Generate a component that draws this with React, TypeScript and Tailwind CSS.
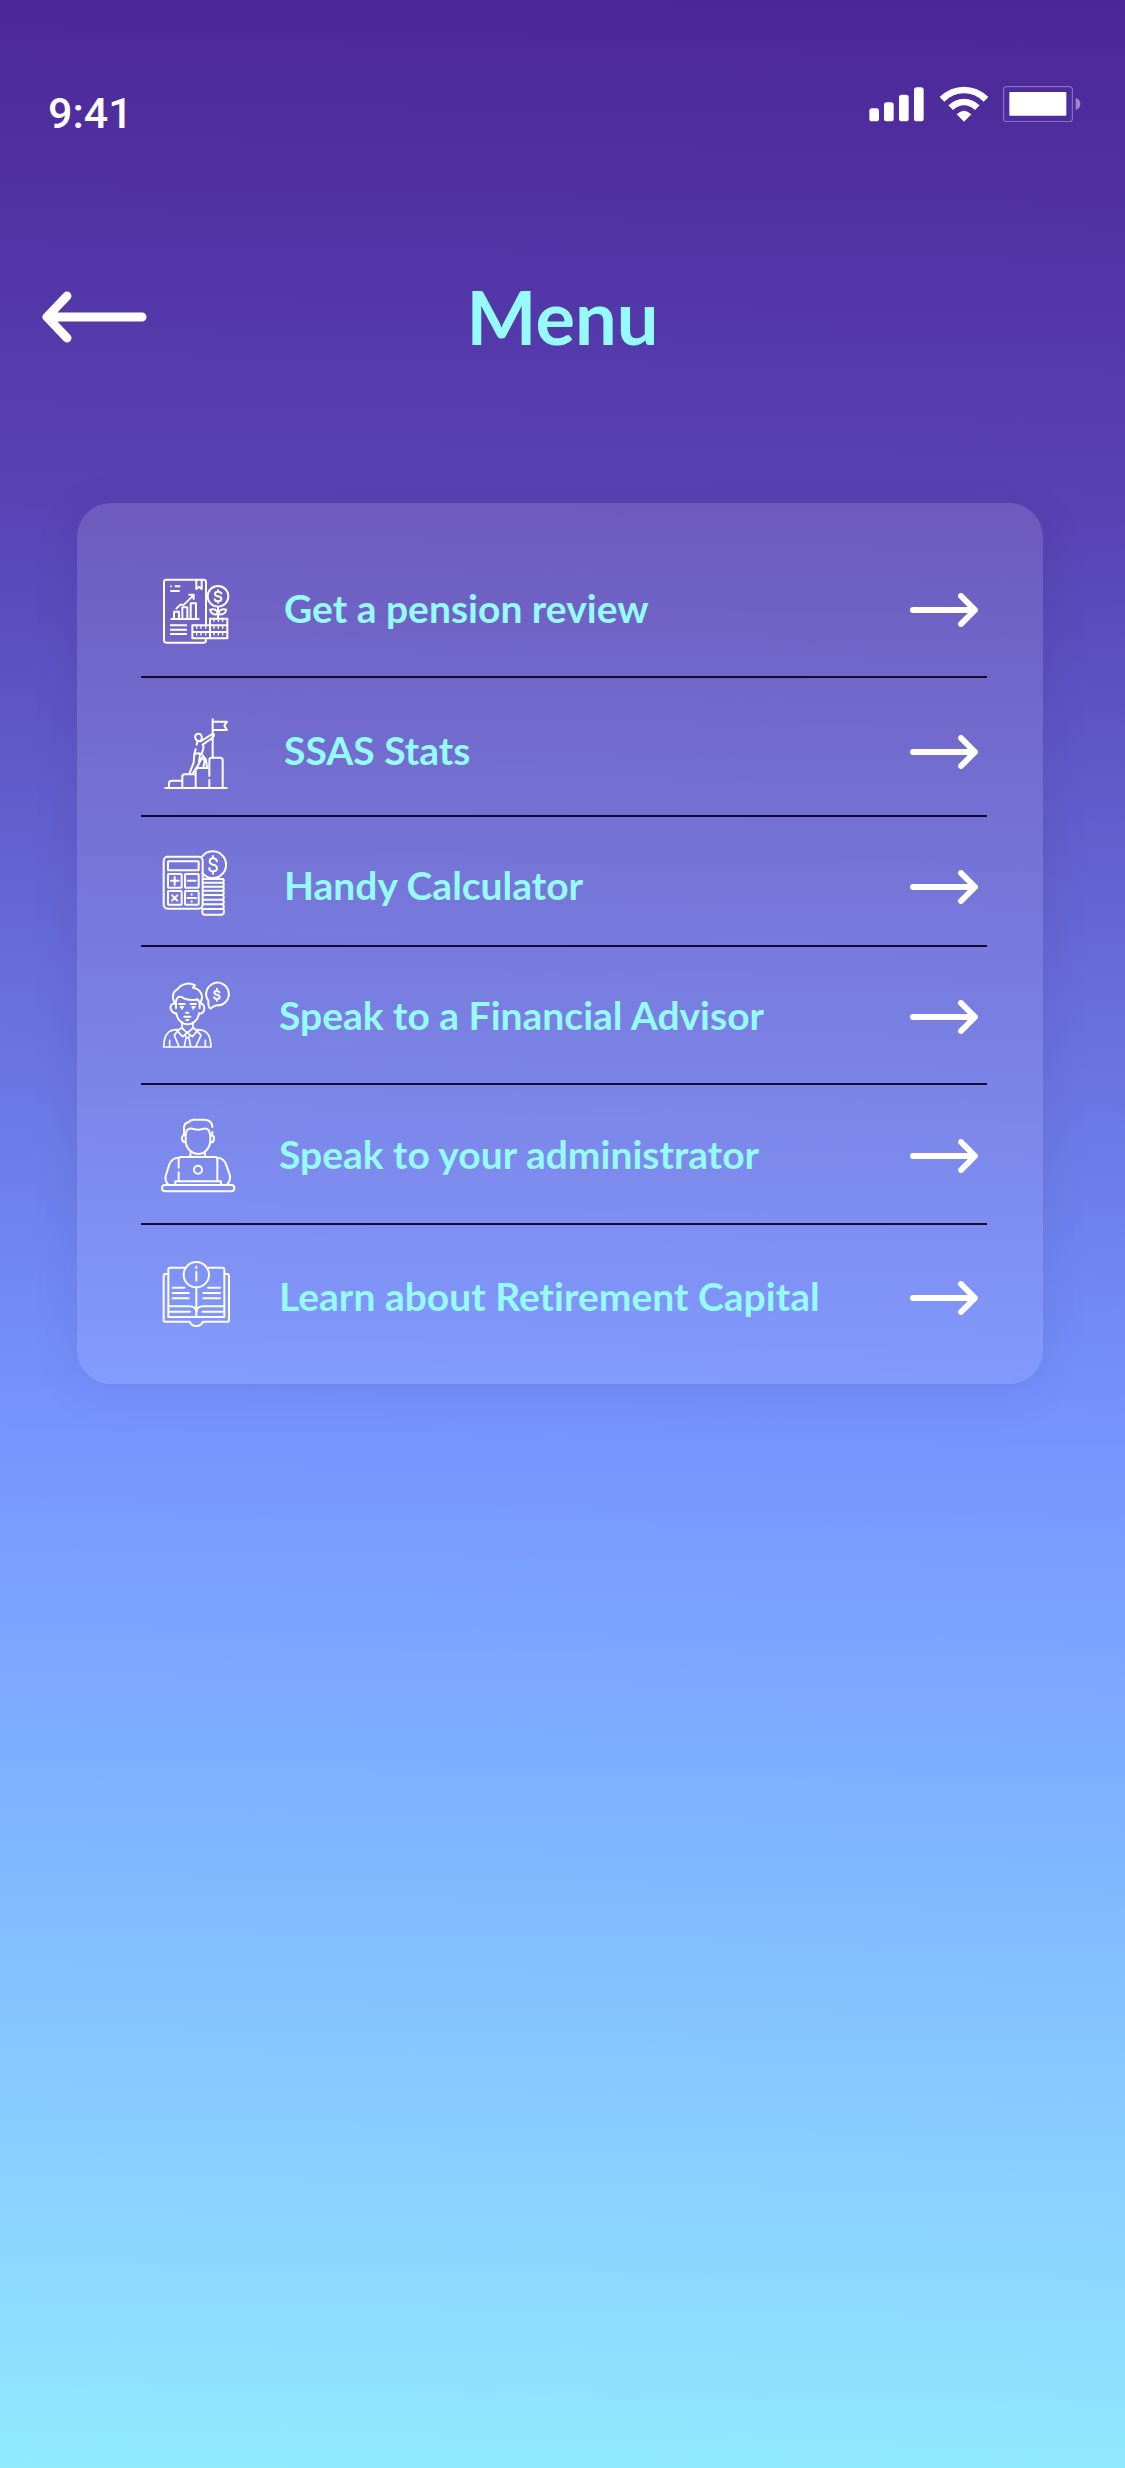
import type { ReactNode } from "react";

function Signal() {
  return (
    <svg className="h-9 w-14" viewBox="57 50 168 108" fill="#fff" aria-hidden="true">
      <rect x="58" y="117" width="29" height="39" rx="8" />
      <rect x="102" y="99" width="29" height="57" rx="8" />
      <rect x="147" y="76" width="29" height="80" rx="8" />
      <rect x="192" y="54" width="29" height="102" rx="8" />
    </svg>
  );
}

function Wifi() {
  return (
    <svg className="h-9 w-[50px]" viewBox="265 52 150 108" fill="none" stroke="#fff" strokeWidth="20" aria-hidden="true">
      <path d="M274 92Q303 64 340 64Q377 64 406 92" />
      <path d="M300 117Q318 100 340 100Q362 100 380 117" />
      <path d="M318 137Q340 116 362 137L340 159Z" fill="#fff" stroke="none" />
    </svg>
  );
}

function Battery() {
  return (
    <svg className="h-9 w-[78px]" viewBox="458 48 234 108" fill="none" aria-hidden="true">
      <rect x="460" y="50" width="206" height="105" rx="7" stroke="#fff" strokeOpacity=".4" strokeWidth="3" />
      <rect x="477" y="66" width="171" height="71" rx="2" fill="#fff" />
      <path d="M676 84Q690 88 690 102Q690 116 676 120Z" fill="#fff" fillOpacity=".45" />
    </svg>
  );
}

function Icon({ viewBox, children }: { viewBox: string; children: ReactNode }) {
  return (
    <svg
      className="size-[100px] shrink-0"
      viewBox={viewBox}
      fill="none"
      stroke="#fff"
      strokeWidth="6"
      strokeLinecap="round"
      strokeLinejoin="round"
      aria-hidden="true"
    >
      {children}
    </svg>
  );
}

const report = (
  <Icon viewBox="0 0 300 300">
    <path d="M168 90V66Q168 59 161 59H49Q42 59 42 66V241Q42 248 49 248H161Q168 248 168 240" />
    <path d="M168 90V194" />
    <path d="M139 60V87L147 80L155 87V60" />
    <path d="M61 79H65M74 79H91M61 93H89" strokeLinecap="butt" />
    <path d="M64 177H146M72 175V155H87V175M97 175V142H112V175M122 175V130H138V175" />
    <path d="M79 146L91 134H102L130 106M118 104H131V117" />
    <path d="M60 196H111M60 209H111M60 222H111" strokeLinecap="butt" />
    <circle cx="204" cy="109" r="31" />
    <path d="M214 100Q211 95 204 95Q195 95 195 102Q195 108 204 109Q214 110 214 117Q214 124 204 124Q196 124 194 118M204 91V95M204 124V128" />
    <path d="M204 140V176M203 162C194 165 182 162 180 149C191 145 202 149 203 162ZM205 162C214 165 227 162 229 149C218 145 207 149 205 162Z" />
    <path d="M180 176H232V235H127V196H232M127 216H232M180 176V235" />
    <path d="M192 178V184M205 178V184M218 178V184M140 199V205M153 199V205M167 199V205M192 199V205M205 199V205M218 199V205M140 219V225M153 219V225M167 219V225M192 219V225M205 219V225M218 219V225" strokeWidth="4" />
  </Icon>
);

const climber = (
  <Icon viewBox="0 6 300 300">
    <path d="M46 264H230" />
    <path d="M57 262V250Q57 242 65 242H96M97 262V230Q97 223 104 223H135M137 262V212Q137 204 145 204H175M178 262V240M178 228V180Q178 173 186 173H210Q218 173 218 181V262" />
    <path d="M188 58V172M189 65H231L223 77L231 90H189" />
    <path d="M142 122C132 116 134 101 145 101C156 101 158 115 152 123Z" />
    <path d="M145 124L152 124L184 104Q193 98 192 107L187 114L158 134L161 142L155 162L168 179L171 203M142 124L140 134M137 148L133 162L131 188L118 221M133 162L146 160L155 162M150 164L146 193L127 222M148 188L157 172L164 183L160 202" />
  </Icon>
);

const calculator = (
  <Icon viewBox="0 3 300 300">
    <rect x="41" y="62" width="117" height="156" rx="12" />
    <rect x="54" y="76" width="92" height="27" rx="2" />
    <rect x="54" y="114" width="41" height="41" rx="2" />
    <rect x="105" y="114" width="41" height="41" rx="2" />
    <rect x="54" y="165" width="41" height="41" rx="2" />
    <rect x="105" y="165" width="41" height="41" rx="2" />
    <path d="M63 134H86M74 123V146M113 134H137M66 178L82 194M82 178L66 194M112 186H138M125 175V176M125 196V197" />
    <path d="M157 61A40 40 0 1 1 157 111" />
    <path d="M201 76Q199 67 189 67Q179 67 179 76Q179 84 189 86Q201 88 201 97Q201 106 189 106Q178 106 178 96M189 60V67M189 106V113" />
    <path d="M159 129H219Q224 134 219 140Q224 146 219 152Q224 158 219 164Q224 170 219 177Q224 184 219 191Q224 198 219 205Q224 211 219 217Q222 220 222 226Q222 236 215 236H164Q157 236 157 228V220M160 140H219M160 152H219M160 164H219M160 177H219M160 191H219M160 205H219M158 219H219" />
  </Icon>
);

const advisor = (
  <Icon viewBox="0 6 300 300">
    <path d="M76 116C69 108 66 93 72 82C78 73 82 76 88 66C99 55 120 52 135 61L129 68C146 70 157 83 156 99L151 116" />
    <path d="M78 130V108C82 94 90 92 102 100C116 108 131 105 143 103L149 113V130M78 116C62 113 58 127 65 137C69 144 75 145 79 145C82 165 96 178 113 178C130 178 144 165 147 145C158 147 163 139 163 130C163 119 157 115 149 116" />
    <path d="M87 117H104M122 117H138M92 126H99M127 126H134M96 130V131M130 130V131M108 143H115M103 155H121M109 165H115" />
    <path d="M96 175V188L112 205L129 188V175M95 190L112 203L98 215L83 199L91 190M129 190L112 203L127 215L141 199L133 190" strokeWidth="5" />
    <path d="M83 194C54 193 42 210 41 246H183C182 209 171 194 141 194M59 226V245M166 226V245M83 197L73 211L87 245M141 197L153 211L137 245M104 211L112 219L121 211M108 218L103 245M117 218L122 245" strokeWidth="5" />
    <path d="M175 107A34 34 0 1 1 201 121Q192 122 181 131Q174 127 175 107Z" />
    <path d="M208 82Q206 77 200 77Q193 77 193 82Q193 88 201 89Q209 91 209 96Q209 102 201 102Q194 102 192 97M201 71V77M201 102V107" />
  </Icon>
);

const administrator = (
  <Icon viewBox="0 3 300 300">
    <path d="M102 91V66Q103 54 117 51Q121 44 131 44H164Q186 45 187 66M187 81V91M102 90Q110 88 110 76Q119 68 130 72Q144 76 158 72Q171 68 177 77L180 88L187 92" />
    <path d="M107 88V110C109 132 126 147 144 147C163 147 179 131 181 110V88M106 91C97 89 95 96 96 103C97 109 101 112 107 112M182 91C191 90 193 97 192 103C191 109 187 113 181 112M121 145V155M165 145V155" />
    <path d="M86 188V163Q86 156 94 156H195Q202 156 202 163V227M86 202V227" />
    <path d="M84 158Q65 160 58 178L47 213Q44 229 56 240M203 158Q222 160 228 178L240 212Q242 229 230 240" />
    <circle cx="144" cy="194" r="12" />
    <path d="M76 239V229H213V239" />
    <rect x="36" y="240" width="217" height="19" rx="9" />
  </Icon>
);

const book = (
  <Icon viewBox="0 9 300 300">
    <path d="M104 68H60Q55 68 55 73V216H223V73Q223 68 218 68H176" />
    <path d="M52 87H46Q41 87 41 92V226Q41 230 46 230H119Q124 243 139 243Q154 243 159 230H232Q237 230 237 226V92Q237 87 232 87H226" />
    <circle cx="139" cy="89" r="38" />
    <path d="M139 65V69M139 80V107M139 128V215M68 128H103M68 144H116M68 160H116M174 128H210M160 144H210M160 160H210" />
    <path d="M57 184H118Q137 184 139 200Q141 184 160 184H221M59 200H120M157 200H219" />
  </Icon>
);

const items = [
  { label: "Get a pension review", icon: report, row: "pt-[57px] pb-4", gap: "ml-[34px]" },
  { label: "SSAS Stats", icon: climber, row: "pt-6 pb-[13px]", gap: "ml-[34px]" },
  { label: "Handy Calculator", icon: calculator, row: "pt-5 pb-2", gap: "ml-[34px]" },
  { label: "Speak to a Financial Advisor", icon: advisor, row: "pt-5 pb-4", gap: "ml-[29px]" },
  { label: "Speak to your administrator", icon: administrator, row: "pt-[21px] pb-[17px]", gap: "ml-[29px]" },
  { label: "Learn about Retirement Capital", icon: book, row: "pt-[23px] pb-9", gap: "ml-[29px]" },
];

export default function App() {
  return (
    <div className="min-h-screen bg-[linear-gradient(181deg,#4c2696_0%,#5843b5_21%,#7592ff_57%,#91eaff_100%)] font-['Lato',sans-serif] font-bold">
      <div className="flex items-start justify-between pt-[86px] pr-11 pl-12 text-white">
        <span className="font-['Roboto',sans-serif] text-[43px] leading-[54px] font-medium">9:41</span>
        <div className="flex items-center gap-3.5">
          <Signal />
          <Wifi />
          <Battery />
        </div>
      </div>

      <header className="mt-[132px] grid grid-cols-[1fr_auto_1fr] items-center px-[42px]">
        <button type="button" aria-label="Back" className="w-[105px]">
          <svg className="h-[52px] w-[105px]" viewBox="0 0 105 52" fill="none" stroke="#fff" strokeWidth="9" strokeLinecap="round" strokeLinejoin="round" aria-hidden="true">
            <path d="M25 5L5 26L25 47M6 26H100" />
          </svg>
        </button>
        <h1 className="text-[74px] leading-[90px] text-[#96fbfb]">Menu</h1>
      </header>

      <nav
        aria-label="Menu"
        className="mt-[141px] mr-[82px] ml-[77px] rounded-[34px] bg-linear-to-b from-white/13 to-white/10 pr-14 pl-16 shadow-[0_8px_50px_rgba(0,0,0,0.08)]"
      >
        <ul className="divide-y-2 divide-[#150a35]">
          {items.map(({ label, icon, row, gap }) => (
            <li key={label} className={row}>
              <a href="#" className="flex items-center px-[9px]">
                {icon}
                <span className={`${gap} flex-1 pb-1 text-[39px] leading-[46px] whitespace-nowrap text-[#96fbfb] [font-variant-ligatures:none]`}>{label}</span>
                <svg className="h-[34px] w-[68px] shrink-0" viewBox="0 0 68 34" fill="none" stroke="#fff" strokeWidth="6" strokeLinecap="round" strokeLinejoin="round" aria-hidden="true">
                  <path d="M51 3L65 17L51 31M3 17H64" />
                </svg>
              </a>
            </li>
          ))}
        </ul>
      </nav>
    </div>
  );
}
